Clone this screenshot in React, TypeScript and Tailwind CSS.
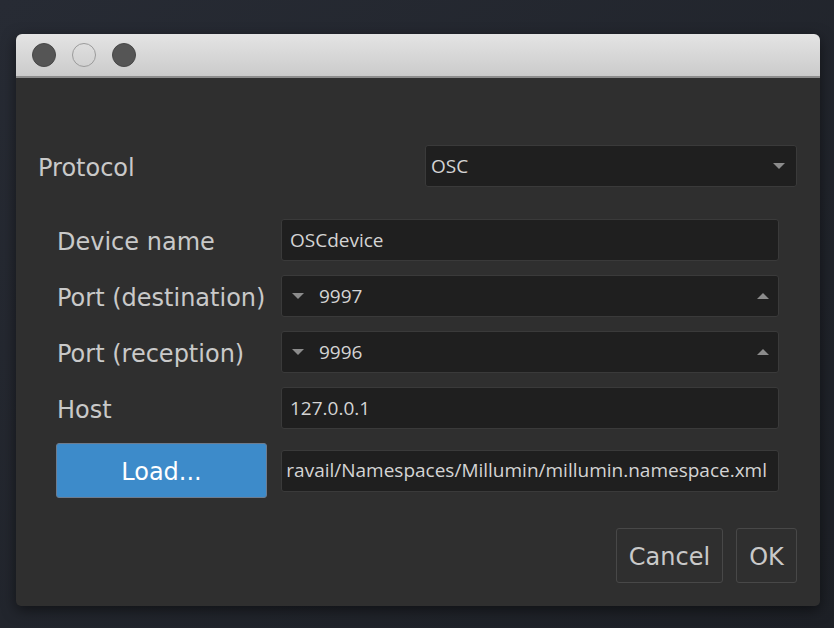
const label = "font-['DejaVu_Sans',sans-serif] text-[24px] text-[#c9c9c9]";
const value = "font-['Open_Sans',sans-serif] font-medium text-[19px] text-[#d4d4d4]";
const field = "h-[42px] rounded-[3px] border border-[#3a3a3a] bg-[#1f1f1f]";

function Down({ className }: { className?: string }) {
  return (
    <svg width="12" height="6" viewBox="0 0 12 6" className={className}>
      <path d="M0 0H12L6 6Z" fill="#8c8c8c" />
    </svg>
  );
}

function Up({ className }: { className?: string }) {
  return (
    <svg width="12" height="6" viewBox="0 0 12 6" className={className}>
      <path d="M0 6H12L6 0Z" fill="#8c8c8c" />
    </svg>
  );
}

function Spin({ v }: { v: string }) {
  return (
    <div className={`${field} flex flex-1 items-center pl-[10px] pr-[9px]`}>
      <Down />
      <span className={`${value} ml-[15px] flex-1`}>{v}</span>
      <Up />
    </div>
  );
}

function Row({ name, children }: { name: string; children: React.ReactNode }) {
  return (
    <div className="flex items-center">
      <div className={`${label} w-[224px] whitespace-nowrap pt-[3px]`}>{name}</div>
      {children}
    </div>
  );
}

export default function App() {
  return (
    <div className="min-h-screen w-full bg-gradient-to-br from-[#272b34] to-[#1d2026] pt-[34px] pl-[16px]">
      <div className="w-[804px] h-[572px] flex flex-col rounded-t-[6px] rounded-b-[5px] overflow-hidden bg-[#2f2f2f] shadow-[0_4px_14px_rgba(0,0,0,0.5)]">
        {/* title bar */}
        <div className="h-[42px] flex items-center gap-[16px] pl-[16px] bg-gradient-to-b from-[#e4e4e4] to-[#cbcbcb] border-b-2 border-[#8d8d8d] box-content">
          <div className="w-6 h-6 rounded-full bg-[#555555] border border-[#474747]" />
          <div className="w-6 h-6 rounded-full border-[1.5px] border-[#9b9b9b]" />
          <div className="w-6 h-6 rounded-full bg-[#555555] border border-[#474747]" />
        </div>

        <div className="flex flex-col flex-1 px-[23px] pl-[22px] pt-[67px]">
          <div className="flex items-center justify-between">
            <span className={`${label} pt-[3px]`}>Protocol</span>
            <div className={`${field} w-[372px] flex items-center pl-[5px] pr-[11px]`}>
              <span className={`${value} flex-1`}>OSC</span>
              <Down />
            </div>
          </div>

          <div className="flex flex-col gap-[14px] mt-[32px] pl-[19px] pr-[18px]">
            <Row name="Device name">
              <div className={`${field} flex flex-1 items-center pl-[8px]`}>
                <span className={value}>OSCdevice</span>
              </div>
            </Row>
            <Row name="Port (destination)">
              <Spin v="9997" />
            </Row>
            <Row name="Port (reception)">
              <Spin v="9996" />
            </Row>
            <Row name="Host">
              <div className={`${field} flex flex-1 items-center pl-[8px]`}>
                <span className={value}>127.0.0.1</span>
              </div>
            </Row>
            <div className="flex items-center">
              <button className="w-[211px] h-[55px] -ml-[1px] mr-[14px] pt-[2px] rounded-[3px] border border-[#6d7c8f] bg-[#3d8bca] font-['DejaVu_Sans',sans-serif] text-[24px] text-white">
                Load...
              </button>
              <div className={`${field} flex flex-1 items-center justify-end overflow-hidden pr-[11px]`}>
                <span className={`${value} whitespace-nowrap`}>
                  ravail/Namespaces/Millumin/millumin.namespace.xml
                </span>
              </div>
            </div>
          </div>

          <div className="flex justify-end gap-[13px] mt-auto mb-[23px]">
            <button className="w-[107px] h-[55px] pt-[2px] rounded-[3px] border border-[#484848] font-['DejaVu_Sans',sans-serif] text-[24px] text-[#c9c9c9]">
              Cancel
            </button>
            <button className="w-[61px] h-[55px] pt-[2px] rounded-[3px] border border-[#484848] font-['DejaVu_Sans',sans-serif] text-[24px] text-[#c9c9c9]">
              OK
            </button>
          </div>
        </div>
      </div>
    </div>
  );
}
